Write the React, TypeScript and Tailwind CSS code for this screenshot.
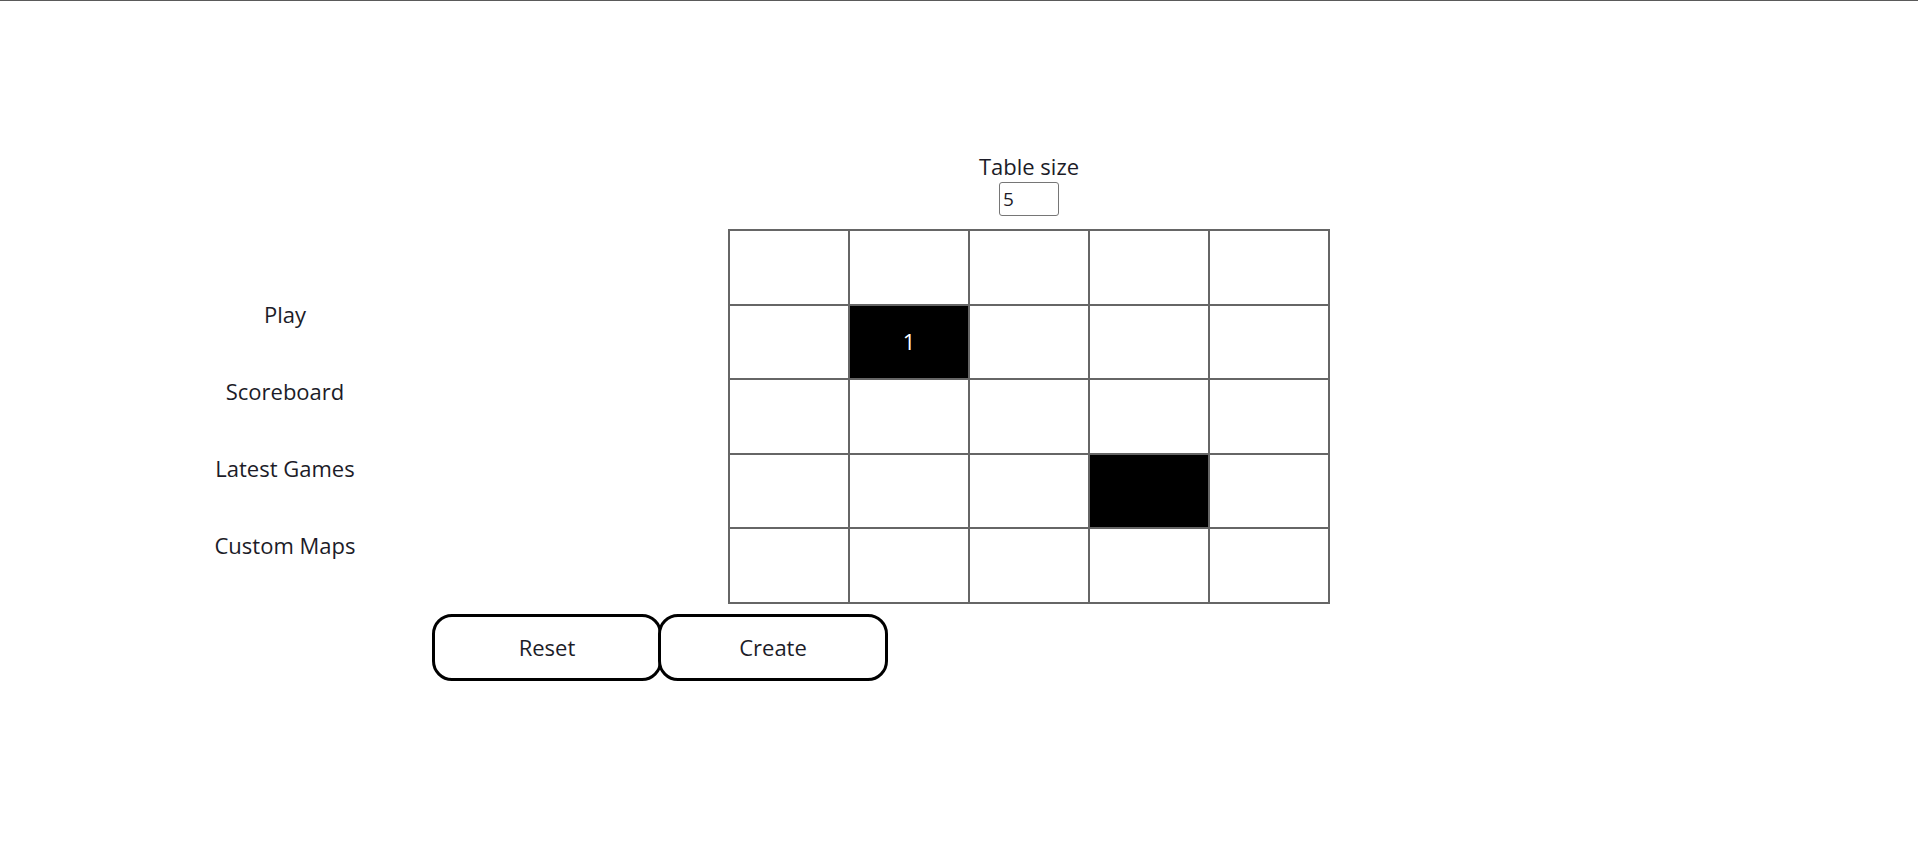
import React from 'react';

const SIZE = 5;
const filled: Record<string, string> = { '1-1': '1', '3-3': '' };

function MenuItem({ label }: { label: string }) {
  return <div className="h-[32px] leading-[32px] text-[22px] text-[#1c1c28]">{label}</div>;
}

export default function App() {
  const cells = [];
  for (let r = 0; r < SIZE; r++) {
    for (let c = 0; c < SIZE; c++) {
      const key = `${r}-${c}`;
      const isFilled = key in filled;
      cells.push(
        <div
          key={key}
          className={`w-[118px] h-[72.6px] flex items-center justify-center text-[22px] ${
            isFilled ? 'bg-black text-white' : 'bg-white'
          }`}
        >
          {filled[key]}
        </div>
      );
    }
  }

  return (
    <div className="min-h-[853px] bg-white border-t border-[#5a5a5a] font-['Open_Sans',sans-serif] text-[#1c1c28]">
      <div className="flex items-start pt-[149px]">
        <div className="w-[570px] flex flex-col items-center gap-[45px] pt-[148px]">
          <MenuItem label="Play" />
          <MenuItem label="Scoreboard" />
          <MenuItem label="Latest Games" />
          <MenuItem label="Custom Maps" />
        </div>

        <div className="w-[918px] flex flex-col items-center">
          <div className="text-[22px] leading-[32px]">Table size</div>
          <input
            type="text"
            defaultValue="5"
            className="w-[60px] h-[34px] border border-[#767676] rounded-[3px] px-[3px] text-[19px] outline-none"
          />
          <div className="mt-[13px] grid grid-cols-5 gap-[2px] p-[2px] bg-[#666666]">{cells}</div>
          <div className="self-start -ml-[138px] mt-[10px] flex">
            <button
              type="button"
              className="w-[230px] h-[67px] border-[3px] border-black rounded-[20px] bg-white text-[22px]"
            >
              Reset
            </button>
            <button
              type="button"
              className="w-[230px] h-[67px] -ml-[4px] border-[3px] border-black rounded-[20px] bg-white text-[22px]"
            >
              Create
            </button>
          </div>
        </div>
      </div>
    </div>
  );
}
